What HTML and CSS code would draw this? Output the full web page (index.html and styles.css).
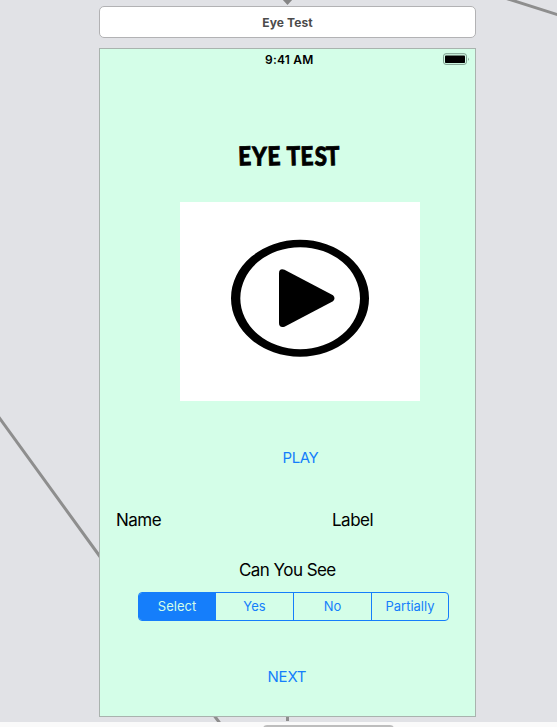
FILE: index.html
```html
<!DOCTYPE html>
<html lang="en">
<head>
<meta charset="utf-8">
<title>Eye Test</title>
<link rel="stylesheet" href="styles.css">
</head>
<body>
<div class="canvas">
  <svg class="segues" width="557" height="722" viewBox="0 0 557 722" aria-hidden="true">
    <path d="M505-2 L560 15.5 M-2 416 L101 558 M213 714 L222 726 M287.5 714 V721"/>
    <path class="arrow" d="M282 -1 H293 L287.5 5Z"/>
  </svg>
  <header class="scene-title"><span>Eye Test</span></header>
  <main class="phone">
    <div class="status">
      <span class="time">9:41 AM</span>
      <svg class="battery" width="28" height="12" viewBox="0 0 28 12" aria-hidden="true">
        <rect x=".5" y=".7" width="23" height="10.7" rx="2.5" fill="none" stroke="#7d9c8d"/>
        <rect x="2" y="2.5" width="20" height="7.5" rx=".8"/>
        <path d="M25 4.5 Q26.5 6.1 25 7.9Z" fill="#688376"/>
      </svg>
    </div>
    <h1 class="heading">
      <svg width="116" height="40" viewBox="0 0 116 40">
        <text transform="scale(.9 1.04)" y="27.4" x="6 20.8 38.6 52 60 75.2 90.5 103.5" rotate="-2 1 -2 0 -2 -2 1 -2">EYE TEST</text>
      </svg>
    </h1>
    <div class="video">
      <svg width="240" height="199" viewBox="0 0 240 199" aria-hidden="true">
        <path fill-rule="evenodd" d="M51 96.2 A69 58.5 0 0 1 189 96.2 A69 58.5 0 0 1 51 96.2Z M60.3 96.2 A59.8 51 0 0 0 180 96.2 A59.8 51 0 0 0 60.3 96.2Z"/>
        <path d="M99 71.5 Q99 66 104.5 67.7 L153 93.2 Q156 96.2 153 99.2 L104.5 124.7 Q99 126 99 121Z"/>
      </svg>
    </div>
    <a class="link play"><span>PLAY</span></a>
    <div class="fields"><span class="name">Name</span><span class="label">Label</span></div>
    <p class="question"><span>Can You See</span></p>
    <div class="segments">
      <span class="segment selected">Select</span>
      <span class="segment">Yes</span>
      <span class="segment">No</span>
      <span class="segment">Partially</span>
    </div>
    <a class="link next"><span>NEXT</span></a>
  </main>
</div>
<footer class="bottom"><div class="scrollbar"></div></footer>
</body>
</html>
```
FILE: styles.css
```css
* { box-sizing: border-box; }
body {
  margin: 0;
  width: 557px;
  height: 727px;
  overflow: hidden;
  background: #fafafa;
  font-family: Inter, "Liberation Sans", sans-serif;
  color: #000;
}
.canvas {
  position: relative;
  height: 722px;
  padding: 6px 0 0 99px;
  background: #e1e2e6;
  overflow: hidden;
}
.segues { position: absolute; left: 0; top: 0; }
.segues path { fill: none; stroke: #8e8e8e; stroke-width: 3; }
.segues .arrow { fill: #858585; stroke: none; }
.scene-title {
  position: relative;
  width: 377px;
  height: 32px;
  border: 1px solid #b2b2b4;
  border-radius: 5px;
  background: #fff;
  color: #4b4b4b;
  text-align: center;
  font-size: 12px;
  font-weight: 700;
  line-height: 31px;
  letter-spacing: .1px;
}
.phone {
  position: relative;
  display: flex;
  flex-direction: column;
  width: 377px;
  height: 669px;
  margin-top: 10px;
  border: 1px solid #a9b3ae;
  background: #d4fee8;
}
.status {
  display: flex;
  height: 20px;
  padding: 4px 4px 0 165px;
  justify-content: space-between;
}
.time { font-size: 12px; font-weight: 600; line-height: 14px; letter-spacing: .2px; }
.heading { height: 40px; margin: 68px 0 0 133px; line-height: 40px; }
.heading svg { display: block; overflow: visible; }
.heading text { font: 900 25px Lato, sans-serif; stroke: #000; stroke-width: .8px; }
.video { width: 240px; height: 199px; margin: 25px 0 0 80px; background: #fff; }
.video svg { display: block; }
.link { color: #157efb; font-size: 15px; line-height: 20px; }
.play { margin: 47px 0 0 182.5px; letter-spacing: -.4px; }
.fields {
  display: grid;
  grid-template-columns: 216px 1fr;
  margin: 41px 0 0 16px;
  font-size: 17px;
  line-height: 22px;
  letter-spacing: -.5px;
}
.question {
  margin: 28px 0 0 139px;
  font-size: 17px;
  line-height: 22px;
  letter-spacing: -.55px;
}
.segments {
  display: grid;
  grid-template-columns: 76px 78px 78px 1fr;
  width: 311px;
  height: 29px;
  margin: 11px 0 0 38px;
  border: 1px solid #157efb;
  border-radius: 4px;
  overflow: hidden;
  color: #157efb;
  font-size: 13px;
  line-height: 27px;
  text-align: center;
}
.segment + .segment { border-left: 1px solid #157efb; }
.selected { background: #157efb; color: #d4fee8; }
.next { margin: 46px 0 0 167.5px; letter-spacing: -.2px; }
.bottom { height: 5px; padding: 3px 0 0 263px; overflow: hidden; }
.scrollbar { width: 131px; height: 8px; border-radius: 4px; background: #bdbdbd; }
```
